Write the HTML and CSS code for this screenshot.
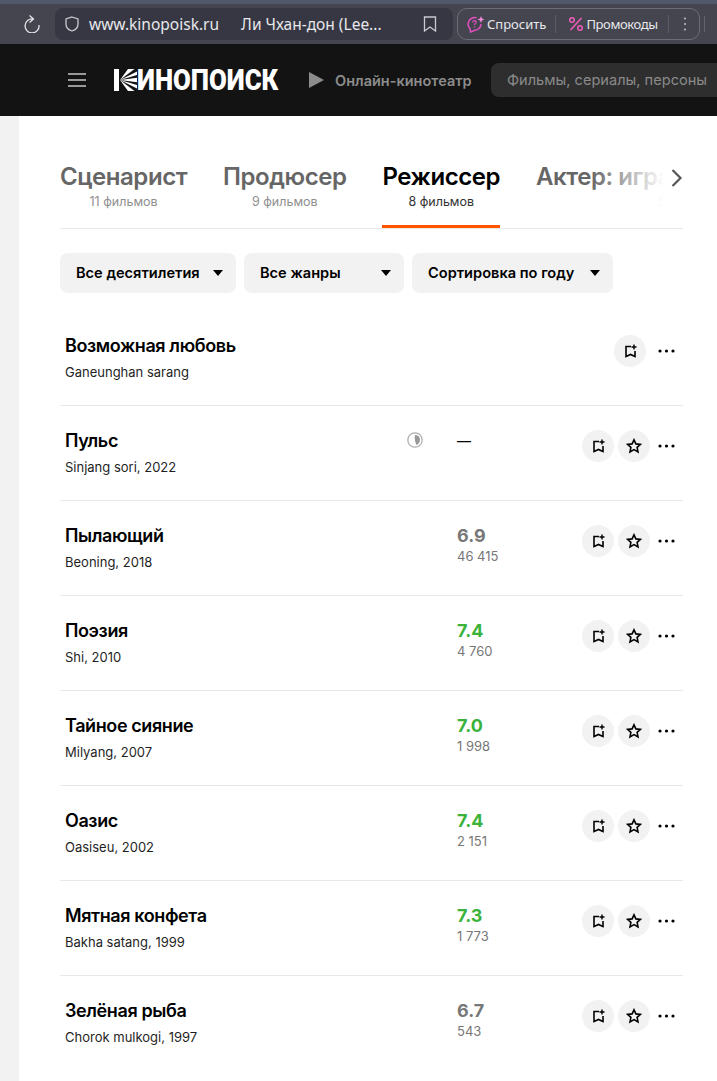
FILE: index.html
```html
<!DOCTYPE html>
<html lang="ru">
<head>
	<meta charset="utf-8">
	<title>Ли Чхан-дон</title>
	<link rel="stylesheet" href="styles.css">
</head>
<body>
	<svg class="defs" width="0" height="0">
		<symbol id="i-list" viewBox="0 0 16 16">
			<path d="M9 3.5H4v10l4.500-2 4.500 2V8" fill="none" stroke="currentColor" stroke-width="1.6"/>
			<path d="M12 1.500v5M9.500 4h5" fill="none" stroke="currentColor" stroke-width="1.4"/>
		</symbol>
		<symbol id="i-star" viewBox="0 0 16 16">
			<path d="M8 1.800l1.900 4.100 4.500.5-3.300 3 .9 4.500L8 11.600l-4 2.300.9-4.500-3.300-3 4.500-.5z" fill="none" stroke="currentColor" stroke-width="1.6"/>
		</symbol>
		<symbol id="i-dots" viewBox="0 0 17 4">
			<circle cx="2" cy="2" r="1.600" fill="currentColor"/>
			<circle cx="8.500" cy="2" r="1.600" fill="currentColor"/>
			<circle cx="15" cy="2" r="1.600" fill="currentColor"/>
		</symbol>
	</svg>

	<div class="browser-bar">
		<svg class="reload" width="18" height="18" viewBox="0 0 18 18"><path d="M11 4A7 7 0 1 0 17 10M7.500 .5L11.500 4 7.500 7.500" fill="none" stroke="#e4e4e8" stroke-width="1.300"/></svg>
		<div class="address">
			<svg width="16" height="18" viewBox="0 0 16 18"><path d="M8 2l6 2v5c0 3.500-2.800 6-6 7-3.200-1-6-3.500-6-7V4z" fill="none" stroke="#c9cad0" stroke-width="1.300"/></svg>
			<span class="url">www.kinopoisk.ru</span>
			<span class="page-title">Ли Чхан-дон (Lee...</span>
			<svg class="mark" width="14" height="16" viewBox="0 0 14 16"><path d="M1.500 1h11v14L7 11l-5.500 4z" fill="none" stroke="#c9cad0" stroke-width="1.300"/></svg>
		</div>
		<div class="side-pill">
			<svg width="20" height="20" viewBox="0 0 20 20"><path d="M9.500 3.800A6.500 6.500 0 0 0 3 14.500L3.500 18 8 16.300A6.500 6.500 0 0 0 14 10" fill="none" stroke="#e44fc0" stroke-width="1.500"/><path d="M5.800 8.500c0-2.500 3.500-2.300 3.300-.2-.1 1.300-1.600 1.400-1.600 2.800M7.500 12.300v1.200" fill="none" stroke="#e44fc0" stroke-width="1.300"/><path d="M14 2l1 2.500 2.500 1-2.500 1-1 2.500-1-2.500-2.500-1 2.500-1z" fill="#f08ad8"/></svg>
			<span class="pill-text">Спросить</span>
			<i class="pill-sep"></i>
			<svg width="16" height="16" viewBox="0 0 16 16"><path d="M13.500 2L2.500 14" stroke="#ec5cb8" stroke-width="1.700"/><circle cx="4" cy="4" r="2.300" fill="none" stroke="#ec5cb8" stroke-width="1.500"/><circle cx="12" cy="12" r="2.300" fill="none" stroke="#ec5cb8" stroke-width="1.500"/></svg>
			<span class="pill-text pill-promo">Промокоды</span>
			<i class="pill-sep pill-sep-last"></i>
			<svg class="pill-more" width="4" height="16" viewBox="0 0 4 16"><circle cx="2" cy="2.500" r="1.100" fill="#b5b6bc"/><circle cx="2" cy="8" r="1.100" fill="#b5b6bc"/><circle cx="2" cy="13.500" r="1.100" fill="#b5b6bc"/></svg>
		</div>
		<i class="bar-sep"></i>
	</div>

	<header class="site-header">
		<div class="burger"><i></i><i></i><i></i></div>
		<div class="logo">
			<svg class="logo-mark" width="23" height="22" viewBox="0 0 23 22"><path d="M0 0h5v22H0z" fill="#fff"/><path d="M6 11L14 0h6.500zM6 11L23 2.500V6zM6 11L23 8.800v4.400zM6 11L23 16v3.500zM6 11L20.500 22H14z" fill="#fff"/></svg>
			<span class="logo-text">ИНОПОИСК</span>
		</div>
		<div class="cinema">
			<svg width="15" height="16" viewBox="0 0 15 16"><path d="M0 0l15 8-15 8z" fill="#8c8c8c"/></svg>
			<span>Онлайн-кинотеатр</span>
		</div>
		<div class="search">Фильмы, сериалы, персоны</div>
	</header>

	<div class="page">
		<main class="content">
			<div class="tabs">
				<div class="tab"><div class="tab-name">Сценарист</div><div class="tab-count">11 фильмов</div></div>
				<div class="tab"><div class="tab-name">Продюсер</div><div class="tab-count">9 фильмов</div></div>
				<div class="tab tab-active"><div class="tab-name">Режиссер</div><div class="tab-count">8 фильмов</div></div>
				<div class="tab"><div class="tab-name">Актер: играет самого себя</div><div class="tab-count">5 фильмов</div></div>
				<div class="tabs-fade"></div>
				<svg class="tabs-next" width="12" height="18" viewBox="0 0 12 18"><path d="M1.500 1l8 8-8 8" fill="none" stroke="#555" stroke-width="2.200"/></svg>
			</div>

			<div class="filters">
				<div class="filter filter-decade">Все десятилетия<i class="arrow"></i></div>
				<div class="filter filter-genre">Все жанры<i class="arrow"></i></div>
				<div class="filter filter-sort">Сортировка по году<i class="arrow"></i></div>
			</div>

			<div class="row">
				<div class="info"><div class="name">Возможная любовь</div><div class="orig">Ganeunghan sarang</div></div>
				<div class="actions actions-single">
					<span class="round"><svg width="16" height="16"><use href="#i-list"/></svg></span>
					<svg class="more" width="17" height="4"><use href="#i-dots"/></svg>
				</div>
			</div>
			<div class="row">
				<div class="info"><div class="name">Пульс</div><div class="orig">Sinjang sori, 2022</div></div>
				<svg class="badge" width="16" height="16" viewBox="0 0 16 16"><circle cx="8" cy="8" r="7.200" fill="none" stroke="#aaa" stroke-width="1.200"/><path d="M8 3c3.500 0 5.200 2.500 5 5-.2 2.800-2 4.500-3.500 5C8.500 10.500 7 6 8 3z" fill="#999"/></svg>
				<div class="rating"><div class="none">—</div></div>
				<div class="actions">
					<span class="round"><svg width="16" height="16"><use href="#i-list"/></svg></span>
					<span class="round"><svg width="16" height="16"><use href="#i-star"/></svg></span>
					<svg class="more" width="17" height="4"><use href="#i-dots"/></svg>
				</div>
			</div>
			<div class="row">
				<div class="info"><div class="name">Пылающий</div><div class="orig">Beoning, 2018</div></div>
				<div class="rating"><div class="score">6.9</div><div class="votes">46 415</div></div>
				<div class="actions">
					<span class="round"><svg width="16" height="16"><use href="#i-list"/></svg></span>
					<span class="round"><svg width="16" height="16"><use href="#i-star"/></svg></span>
					<svg class="more" width="17" height="4"><use href="#i-dots"/></svg>
				</div>
			</div>
			<div class="row">
				<div class="info"><div class="name">Поэзия</div><div class="orig">Shi, 2010</div></div>
				<div class="rating"><div class="score good">7.4</div><div class="votes">4 760</div></div>
				<div class="actions">
					<span class="round"><svg width="16" height="16"><use href="#i-list"/></svg></span>
					<span class="round"><svg width="16" height="16"><use href="#i-star"/></svg></span>
					<svg class="more" width="17" height="4"><use href="#i-dots"/></svg>
				</div>
			</div>
			<div class="row">
				<div class="info"><div class="name">Тайное сияние</div><div class="orig">Milyang, 2007</div></div>
				<div class="rating"><div class="score good">7.0</div><div class="votes">1 998</div></div>
				<div class="actions">
					<span class="round"><svg width="16" height="16"><use href="#i-list"/></svg></span>
					<span class="round"><svg width="16" height="16"><use href="#i-star"/></svg></span>
					<svg class="more" width="17" height="4"><use href="#i-dots"/></svg>
				</div>
			</div>
			<div class="row">
				<div class="info"><div class="name">Оазис</div><div class="orig">Oasiseu, 2002</div></div>
				<div class="rating"><div class="score good">7.4</div><div class="votes">2 151</div></div>
				<div class="actions">
					<span class="round"><svg width="16" height="16"><use href="#i-list"/></svg></span>
					<span class="round"><svg width="16" height="16"><use href="#i-star"/></svg></span>
					<svg class="more" width="17" height="4"><use href="#i-dots"/></svg>
				</div>
			</div>
			<div class="row">
				<div class="info"><div class="name">Мятная конфета</div><div class="orig">Bakha satang, 1999</div></div>
				<div class="rating"><div class="score good">7.3</div><div class="votes">1 773</div></div>
				<div class="actions">
					<span class="round"><svg width="16" height="16"><use href="#i-list"/></svg></span>
					<span class="round"><svg width="16" height="16"><use href="#i-star"/></svg></span>
					<svg class="more" width="17" height="4"><use href="#i-dots"/></svg>
				</div>
			</div>
			<div class="row">
				<div class="info"><div class="name">Зелёная рыба</div><div class="orig">Chorok mulkogi, 1997</div></div>
				<div class="rating"><div class="score">6.7</div><div class="votes">543</div></div>
				<div class="actions">
					<span class="round"><svg width="16" height="16"><use href="#i-list"/></svg></span>
					<span class="round"><svg width="16" height="16"><use href="#i-star"/></svg></span>
					<svg class="more" width="17" height="4"><use href="#i-dots"/></svg>
				</div>
			</div>
		</main>
	</div>
</body>
</html>
```

FILE: styles.css
```css
*
{
	box-sizing: border-box;
}
html, body
{
	margin: 0px;
	padding: 0px;
	height: 100%;
	overflow: hidden;
	background: #fff;
	font-family: Inter, "Liberation Sans", sans-serif;
}
.defs
{
	display: block;
	height: 0px;
}

/* browser toolbar */
.browser-bar
{
	display: flex;
	align-items: center;
	height: 44px;
	padding-left: 22px;
	background: #44454f;
	border-top: 4px solid #505869;
}
.reload
{
	flex: none;
	margin-right: 15px;
}
.address
{
	flex: none;
	display: flex;
	align-items: center;
	width: 398px;
	height: 32px;
	padding: 0px 16px 0px 9px;
	border-radius: 8px;
	background: #363742;
	color: #e8e8ec;
	font-family: "Noto Sans", sans-serif;
	font-size: 15.5px;
}
.url
{
	margin-left: 9px;
}
.page-title
{
	margin-left: 22px;
	white-space: nowrap;
}
.mark
{
	margin-left: auto;
}
.side-pill
{
	flex: none;
	display: flex;
	align-items: center;
	width: 243px;
	height: 32px;
	margin-left: 4px;
	padding-left: 9px;
	border: 1px solid #6c6d78;
	border-radius: 10px;
	color: #e8e8ec;
	font-family: "Noto Sans", sans-serif;
	font-size: 13px;
}
.pill-text
{
	white-space: nowrap;
}
.pill-promo
{
	margin-left: 2px;
	letter-spacing: -0.4px;
}
.pill-sep
{
	flex: none;
	width: 1px;
	height: 18px;
	margin: 0px 12px 0px 9px;
	background: #5b5c67;
}
.pill-sep-last
{
	margin: 0px 0px 0px 10px;
}
.pill-more
{
	margin-left: 14px;
}
.bar-sep
{
	flex: none;
	width: 1px;
	height: 16px;
	margin-left: 4px;
	background: #62636e;
}

/* site header */
.site-header
{
	display: flex;
	align-items: center;
	height: 72px;
	padding-left: 68px;
	background: #131313;
	overflow: hidden;
}
.burger
{
	flex: none;
	width: 18px;
	margin-right: 28px;
}
.burger i
{
	display: block;
	height: 2px;
	margin: 4px 0px;
	background: #999;
}
.logo
{
	flex: none;
	display: flex;
	align-items: center;
	width: 164px;
	margin-right: 31px;
}
.logo-mark
{
	flex: none;
}
.logo-text
{
	flex: none;
	color: #fff;
	font-family: Roboto, sans-serif;
	font-weight: 900;
	font-size: 30px;
	line-height: 30px;
	transform: scaleX(0.86);
	transform-origin: left center;
	white-space: nowrap;
}
.cinema
{
	flex: none;
	display: flex;
	align-items: center;
	width: 182px;
	color: #8c8c8c;
	font-size: 14.5px;
	font-weight: 600;
	white-space: nowrap;
}
.cinema span
{
	margin-left: 11px;
}
.search
{
	flex: none;
	width: 260px;
	height: 34px;
	line-height: 34px;
	padding-left: 16px;
	border-radius: 8px;
	background: #2e2e2e;
	color: #8a8a8a;
	font-size: 14.6px;
	white-space: nowrap;
}

/* page */
.page
{
	height: 965px;
	padding-left: 19px;
	background: #f2f2f2;
}
.content
{
	height: 100%;
	padding: 45px 34px 0px 41px;
	background: #fff;
}
.tabs
{
	position: relative;
	display: flex;
	gap: 36px;
	height: 68px;
	border-bottom: 1px solid #e8e8e8;
	overflow: hidden;
}
.tab
{
	flex: none;
	height: 67px;
	text-align: center;
	color: #666;
}
.tab-name
{
	font-size: 24px;
	line-height: 32px;
	font-weight: 600;
	letter-spacing: -0.45px;
}
.tab-count
{
	font-size: 12.5px;
	line-height: 18px;
	color: #8f8f8f;
}
.tab-active
{
	border-bottom: 3px solid #f50;
	color: #000;
}
.tab-active .tab-count
{
	color: #333;
}
.tabs-fade
{
	position: absolute;
	top: 0px;
	right: 0px;
	width: 92px;
	height: 66px;
	background: linear-gradient(to right, rgba(255,255,255,0), #fff 80%);
}
.tabs-next
{
	position: absolute;
	top: 8px;
	right: 0px;
}
.filters
{
	display: flex;
	gap: 8px;
	margin-top: 24px;
	margin-bottom: 18px;
}
.filter
{
	display: flex;
	align-items: center;
	height: 40px;
	padding: 0px 13px 0px 16px;
	border-radius: 8px;
	background: #f2f2f2;
	color: #000;
	font-size: 14.6px;
	line-height: 38px;
	font-weight: 600;
	white-space: nowrap;
}
.filter-decade
{
	width: 176px;
}
.filter-genre
{
	width: 160px;
}
.filter-sort
{
	width: 201px;
}
.arrow
{
	width: 0px;
	height: 0px;
	margin-left: auto;
	border-left: 5px solid transparent;
	border-right: 5px solid transparent;
	border-top: 6px solid #000;
}

/* film rows */
.row
{
	display: flex;
	align-items: flex-start;
	height: 95px;
	padding: 24px 8px 0px 5px;
	border-bottom: 1px solid #e8e8e8;
}
.row:last-child
{
	border-bottom: none;
}
.info
{
	flex: 1;
}
.name
{
	font-size: 18px;
	line-height: 22px;
	font-weight: 600;
	letter-spacing: -0.4px;
	color: #000;
}
.orig
{
	margin-top: 6px;
	font-size: 13px;
	line-height: 18px;
	color: #1f1f1f;
}
.badge
{
	flex: none;
	margin: 2px 34px 0px 0px;
}
.rating
{
	flex: none;
	width: 125px;
}
.score
{
	font-size: 18px;
	line-height: 22px;
	font-weight: 700;
	color: #777;
}
.good
{
	color: #3bb33b;
}
.none
{
	font-size: 14px;
	line-height: 22px;
	color: #000;
}
.votes
{
	font-size: 13px;
	line-height: 18px;
	color: #777;
}
.actions
{
	flex: none;
	display: flex;
	align-items: center;
	gap: 4px;
	color: #000;
}
.actions-single
{
	gap: 8px;
}
.round
{
	display: flex;
	align-items: center;
	justify-content: center;
	width: 32px;
	height: 32px;
	border-radius: 50%;
	background: #f2f2f2;
}
.more
{
	margin-left: 4px;
}
```
